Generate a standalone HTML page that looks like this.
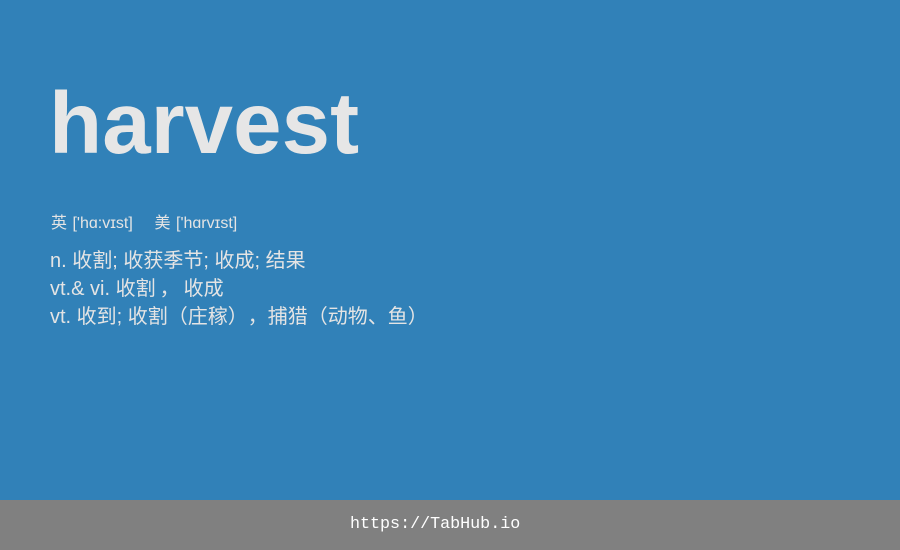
<!DOCTYPE html>
<html><head><meta charset="utf-8"><style>
html,body{margin:0;padding:0;}
body{width:900px;height:550px;background:#3181b8;position:relative;overflow:hidden;font-family:"Liberation Sans","Noto Sans CJK SC",sans-serif;color:#e4e4e4;text-spacing-trim:space-all;}
.t{position:absolute;left:49px;top:74px;font-size:87px;font-weight:bold;line-height:100px;color:#e6e6e6;letter-spacing:0.1px;}
.p{position:absolute;left:51px;top:213px;font-size:16px;line-height:22px;word-spacing:1px;}
.d{position:absolute;left:50px;top:247px;font-size:20px;line-height:28px;}
.c{margin:0 4px 0 4px;}
.f{position:absolute;left:350px;top:500px;height:50px;color:#fff;font-family:"Liberation Mono",monospace;font-size:16.7px;line-height:50px;}
.fb{position:absolute;left:0;top:500px;width:900px;height:50px;background:#808080;}
</style></head><body>
<div class="t">harvest</div>
<div class="p">英 ['hɑ:vɪst]&nbsp;&nbsp;&nbsp; 美 ['hɑrvɪst]</div>
<div class="d">n. 收割; 收获季节; 收成; 结果<br>vt.&amp; vi. 收割<span class="c">，</span>收成<br>vt. 收到; 收割（庄稼），捕猎（动物、鱼）</div>
<div class="fb"></div>
<div class="f">https://TabHub.io</div>
</body></html>
